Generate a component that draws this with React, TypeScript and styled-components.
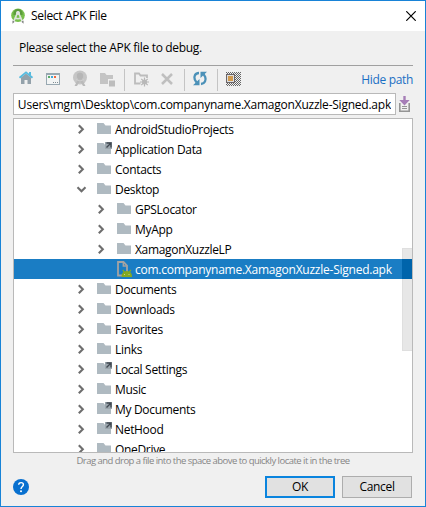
import React from "react";
import styled, { createGlobalStyle } from "styled-components";

const GlobalStyle = createGlobalStyle`
  * { box-sizing: border-box; }
  body { margin: 0; overflow: hidden; }
`;

const Dialog = styled.div`
  width: 426px;
  height: 507px;
  display: flex;
  flex-direction: column;
  border: 1px solid #1883d7;
  background: #f0f0f0;
  color: #000;
  font-family: "Open Sans", "Noto Sans", sans-serif;
  font-size: 12px;
  line-height: 20px;
  white-space: nowrap;
`;

const Label = styled.span<{ $track?: number }>`
  letter-spacing: ${(p) => p.$track ?? -0.32}px;
`;

const TitleBar = styled.header`
  height: 30px;
  flex: none;
  display: flex;
  align-items: center;
  padding: 0 9px 0 9px;
  gap: 6px;
  background: #fff;
`;

const CloseButton = styled.button`
  margin-left: auto;
  padding: 0;
  border: 0;
  background: none;
  display: flex;
`;

const Body = styled.div`
  flex: 1;
  min-height: 0;
  display: flex;
  flex-direction: column;
  padding: 0 12px 8px;
`;

const Message = styled.div`
  height: 34px;
  flex: none;
  padding: 7px 0 0 6px;
`;

const Toolbar = styled.div`
  height: 28px;
  flex: none;
  display: flex;
  border-top: 1px solid #a0a0a0;
  padding: 3px 0 0 5px;
`;

const ToolButton = styled.div<{ $w?: number }>`
  width: ${(p) => p.$w ?? 27}px;
  height: 20px;
  display: flex;
  flex: none;
`;

const Divider = styled.div<{ $after: number }>`
  width: 1px;
  height: 22px;
  flex: none;
  margin-right: ${(p) => p.$after}px;
  background: #c4c4c4;
`;

const PathLink = styled.a`
  margin: 1px 0 0 auto;
  color: #1a6fc4;
`;

const PathRow = styled.div`
  display: flex;
  height: 22px;
  flex: none;
  gap: 3px;
`;

const PathField = styled.div`
  width: 383px;
  height: 22px;
  flex: none;
  border: 1px solid #b9b9b9;
  background: #fff;
  padding: 0 4px;
  display: flex;
`;

const PathText = styled.div`
  flex: 1;
  min-width: 0;
  display: flex;
  justify-content: flex-end;
  overflow: hidden;
  line-height: 21px;
`;

const HistoryButton = styled.div`
  padding-top: 2px;
  display: flex;
`;

const Tree = styled.div`
  position: relative;
  height: 335px;
  flex: none;
  margin-top: 3px;
  border: 1px solid #b9b9b9;
  background: #fff;
  overflow: hidden;
`;

const Row = styled.div<{ $deep?: boolean; $selected?: boolean }>`
  height: 20px;
  display: flex;
  align-items: center;
  padding-left: ${(p) => (p.$deep ? 81 : 61)}px;
  background: ${(p) => (p.$selected ? "#1a7dc4" : "transparent")};
  color: ${(p) => (p.$selected ? "#fff" : "#000")};
`;

const RowText = styled.span`
  height: 20px;
  line-height: 22px;
`;

const Twisty = styled.span`
  width: 22px;
  height: 20px;
  display: flex;
`;

const Glyph = styled.span`
  width: 18px;
  height: 20px;
  display: flex;
`;

const ScrollThumb = styled.div`
  position: absolute;
  top: 129px;
  right: 0;
  width: 10px;
  height: 103px;
  padding-top: 10px;
  background: #e7e7e7;
  border: 1px solid #dfdfdf;
  border-right: 0;
`;

const ThumbOverSelection = styled.div`
  height: 20px;
  margin-left: -1px;
  background: #0064ab;
`;

const Hint = styled.div`
  height: 23px;
  flex: none;
  text-align: center;
  font-size: 9.5px;
  line-height: 15px;
  color: #858585;
`;

const Footer = styled.footer`
  display: flex;
  gap: 7px;
  height: 22px;
  padding-right: 1px;
`;

const HelpSlot = styled.div`
  margin-right: auto;
  padding-top: 3px;
  display: flex;
`;

const Button = styled.button<{ $primary?: boolean }>`
  width: 70px;
  height: 22px;
  padding: 0;
  border: ${(p) => (p.$primary ? "2px solid #0a84de" : "1px solid #adadad")};
  background: #e1e1e1;
  color: #000;
  font: inherit;
  line-height: ${(p) => (p.$primary ? 18 : 20)}px;
`;

const StudioLogo = () => (
  <svg width="15" height="16" viewBox="0 0 15 16">
    <circle cx="8" cy="7.200" r="6.800" fill="#78bf4b" />
    <path d="M3.500 5a4.500 4 0 0 1 9 0v2h-9z" fill="#5c9c3c" />
    <path d="M8 3.500 3.500 14M8 3.500 12.500 14M4.500 9.500q3.500 2.500 7 0" stroke="#dde3dd" strokeWidth="1.700" fill="none" />
    <circle cx="8" cy="5" r="2" fill="#dfe3df" />
    <path d="m2.500 12.500 2 1.200-2 2zM13.500 12.500l-2 1.200 2 2z" fill="#777" />
  </svg>
);

const CloseIcon = () => (
  <svg width="10" height="10" viewBox="0 0 10 10">
    <path d="m.3.3 9.4 9.4M9.7.3.3 9.7" stroke="#000" strokeWidth="1.2" />
  </svg>
);

const HomeIcon = () => (
  <svg width="16" height="18" viewBox="0 0 16 18">
    <path d="M3 8.600 8 4.600l5 4V15H9.500v-4h-3v4H3z" fill="#93a1aa" />
    <path d="M1.500 8.800 8 3.400l6.500 5.400" stroke="#56bbdf" strokeWidth="1.800" fill="none" />
    <path d="M11 3h2v3h-2z" fill="#56bbdf" />
  </svg>
);

const ProjectIcon = () => (
  <svg width="16" height="18" viewBox="0 0 16 18" shapeRendering="crispEdges">
    <path d="M1 4h14v12H1z" fill="#98a8b1" />
    <path d="M2 6h12v9H2z" fill="#f2f4f4" />
    <path d="M3 7h2v2H3z" fill="#57ad68" />
    <path d="M6 7h2v2H6z" fill="#3faad9" />
    <path d="M9 7h2v2H9z" fill="#f2663b" />
    <path d="M8 13h1v1H8zM10 13h1v1h-1zM12 13h1v1h-1z" fill="#7f8b92" />
  </svg>
);

const ModuleIcon = () => (
  <svg width="16" height="18" viewBox="0 0 16 18">
    <circle cx="8" cy="8.500" r="7" fill="#c6c6c6" />
    <path d="m7 8-4.500 9h2.500l2-3.500h2l2 3.500h2.500L9 8z" fill="#bababa" />
    <circle cx="8" cy="7" r="3.200" fill="#b6b6b6" />
    <path d="M4 10.500q4 3 8 0" stroke="#cfcfcf" fill="none" />
  </svg>
);

const FolderModuleIcon = () => (
  <svg width="16" height="18" viewBox="0 0 16 18">
    <path d="M1 4h5l1.500 2H14v4H9v5H1z" fill="#c4c4c4" />
    <path d="M10 11.500h6v6h-6z" fill="#bdbdbd" />
  </svg>
);

const NewFolderIcon = () => (
  <svg width="16" height="18" viewBox="0 0 16 18">
    <path d="M7.500 14.500H2v-10h4l1.500 2H14v2.500" fill="none" stroke="#bcbcbc" strokeWidth="1.800" />
    <path d="M11.500 8.500v9M7 13h9M8.300 9.800l6.400 6.400M14.700 9.800l-6.400 6.400" stroke="#b5b5b5" strokeWidth="1.200" />
    <circle cx="11.500" cy="13" r="2.500" fill="#b8b8b8" />
  </svg>
);

const DeleteIcon = () => (
  <svg width="14" height="18" viewBox="0 0 14 18">
    <path d="m2 5 10 10M12 5 2 15" stroke="#bfbfbf" strokeWidth="2.500" />
  </svg>
);

const RefreshIcon = () => (
  <svg width="16" height="18" viewBox="0 0 16 18">
    <path d="M7 4C3 4 1.700 7.500 2.800 10.500L4.500 13.500M9 15c4-.3 5.300-4 4.200-7L11.500 5" stroke="#4b91b8" strokeWidth="2.300" fill="none" />
    <path d="M1 16.300h6.500V10zM15 2.800H8.500v6.300z" fill="#4b91b8" />
  </svg>
);

const HiddenFilesIcon = () => (
  <svg width="16" height="18" viewBox="0 0 16 18" shapeRendering="crispEdges">
    <defs>
      <pattern id="dots" width="2" height="2" patternUnits="userSpaceOnUse">
        <path d="M0 0h1v1H0zM1 1h1v1H1z" fill="#666" />
      </pattern>
    </defs>
    <path d="M1 3h15v14H1z" fill="url(#dots)" />
    <path d="M1 5h9v9H1z" fill="#6a6468" />
    <path d="M2 6h7v7H2z" fill="#ddd" />
    <path d="M3 7h5v5H3z" fill="#d19a4e" />
  </svg>
);

const HistoryIcon = () => (
  <svg width="12" height="18" viewBox="0 0 12 18">
    <path d="M.8 8v8.200h9.400V8" fill="none" stroke="#949494" strokeWidth="1.600" />
    <path d="M3 11.500h5M3 13.500h5" stroke="#949494" />
    <path d="M4.300 1h2.400v4h4L5.500 10.500.3 5h4z" fill="#a67eb7" />
  </svg>
);

const Chevron = ({ open }: { open?: boolean }) => (
  <svg width="14" height="20" viewBox="0 0 14 20">
    <path
      d={open ? "m2.500 8.300 4 4 4-4" : "m3.800 6.300 4 4-4 4"}
      fill="none"
      stroke="#6e6e6e"
      strokeWidth="2.100"
    />
  </svg>
);

const FolderIcon = ({ link }: { link?: boolean }) => (
  <svg width="16" height="20" viewBox="0 0 16 20">
    <path d="M0 4h6.500L8.500 6.500H14V15H0z" fill="#afbac1" />
    {link && (
      <>
        <path d="M8 3h7v7H8z" fill="#9ba6ad" />
        <path d="M9.500 4H14v4.500M14 4 9.500 8.500" stroke="#414951" strokeWidth="1.400" fill="none" />
      </>
    )}
  </svg>
);

const ApkIcon = () => (
  <svg width="16" height="20" viewBox="0 0 16 20">
    <path d="M1 3h5.500L10 6.500V16.500H1z" fill="#1a7dc4" stroke="#a3a3a3" strokeWidth="1.800" />
    <path d="M6.300 3v4H10" stroke="#a3a3a3" strokeWidth="1.400" fill="none" />
    <path d="M4.500 18q0-6 5.300-6t5.300 6z" fill="#85a922" />
    <path d="m5.800 10.800 2 3M13.800 10.800l-2 3" stroke="#85a922" strokeWidth="1.200" />
    <path d="M7 15h1v1H7zM11.500 15h1v1h-1z" fill="#c7d98c" />
  </svg>
);

const HelpIcon = () => (
  <svg width="16" height="16" viewBox="0 0 16 16">
    <circle cx="8" cy="8" r="8" fill="#0870cf" />
    <path d="M5.700 5.800C5.700 2.800 10.400 3 10.400 5.700 10.400 7.500 8 7.500 8 10" fill="none" stroke="#fff" strokeWidth="1.400" />
    <circle cx="8" cy="12.200" r="1" fill="#fff" />
  </svg>
);

type Item = { name: string; kind?: "folder" | "link" | "apk"; deep?: boolean; open?: boolean; track?: number };

const items: Item[] = [
  { name: "AndroidStudioProjects" },
  { name: "Application Data", kind: "link" },
  { name: "Contacts" },
  { name: "Desktop", open: true },
  { name: "GPSLocator", deep: true },
  { name: "MyApp", deep: true },
  { name: "XamagonXuzzleLP", deep: true },
  { name: "com.companyname.XamagonXuzzle-Signed.apk", kind: "apk", deep: true, track: -0.24 },
  { name: "Documents" },
  { name: "Downloads" },
  { name: "Favorites" },
  { name: "Links" },
  { name: "Local Settings", kind: "link" },
  { name: "Music" },
  { name: "My Documents", kind: "link" },
  { name: "NetHood", kind: "link" },
  { name: "OneDrive" },
];

export default function App() {
  return (
    <>
      <GlobalStyle />
      <Dialog>
        <TitleBar>
          <StudioLogo />
          <Label>Select APK File</Label>
          <CloseButton aria-label="Close"><CloseIcon /></CloseButton>
        </TitleBar>
        <Body>
          <Message><Label>Please select the APK file to debug.</Label></Message>
          <Toolbar>
            <ToolButton><HomeIcon /></ToolButton>
            <ToolButton><ProjectIcon /></ToolButton>
            <ToolButton><ModuleIcon /></ToolButton>
            <ToolButton $w={25}><FolderModuleIcon /></ToolButton>
            <Divider $after={8} />
            <ToolButton><NewFolderIcon /></ToolButton>
            <ToolButton $w={24}><DeleteIcon /></ToolButton>
            <Divider $after={7} />
            <ToolButton $w={25}><RefreshIcon /></ToolButton>
            <Divider $after={7} />
            <ToolButton><HiddenFilesIcon /></ToolButton>
            <PathLink><Label>Hide path</Label></PathLink>
          </Toolbar>
          <PathRow>
            <PathField>
              <PathText>
                <Label $track={-0.23}>\Users\mgm\Desktop\com.companyname.XamagonXuzzle-Signed.apk</Label>
              </PathText>
            </PathField>
            <HistoryButton><HistoryIcon /></HistoryButton>
          </PathRow>
          <Tree>
            {items.map((item) => (
              <Row key={item.name} $deep={item.deep} $selected={item.kind === "apk"}>
                <Twisty>{item.kind !== "apk" && <Chevron open={item.open} />}</Twisty>
                <Glyph>{item.kind === "apk" ? <ApkIcon /> : <FolderIcon link={item.kind === "link"} />}</Glyph>
                <RowText><Label $track={item.track}>{item.name}</Label></RowText>
              </Row>
            ))}
            <ScrollThumb><ThumbOverSelection /></ScrollThumb>
          </Tree>
          <Hint><Label $track={-0.53}>Drag and drop a file into the space above to quickly locate it in the tree</Label></Hint>
          <Footer>
            <HelpSlot><HelpIcon /></HelpSlot>
            <Button $primary><Label>OK</Label></Button>
            <Button><Label>Cancel</Label></Button>
          </Footer>
        </Body>
      </Dialog>
    </>
  );
}
